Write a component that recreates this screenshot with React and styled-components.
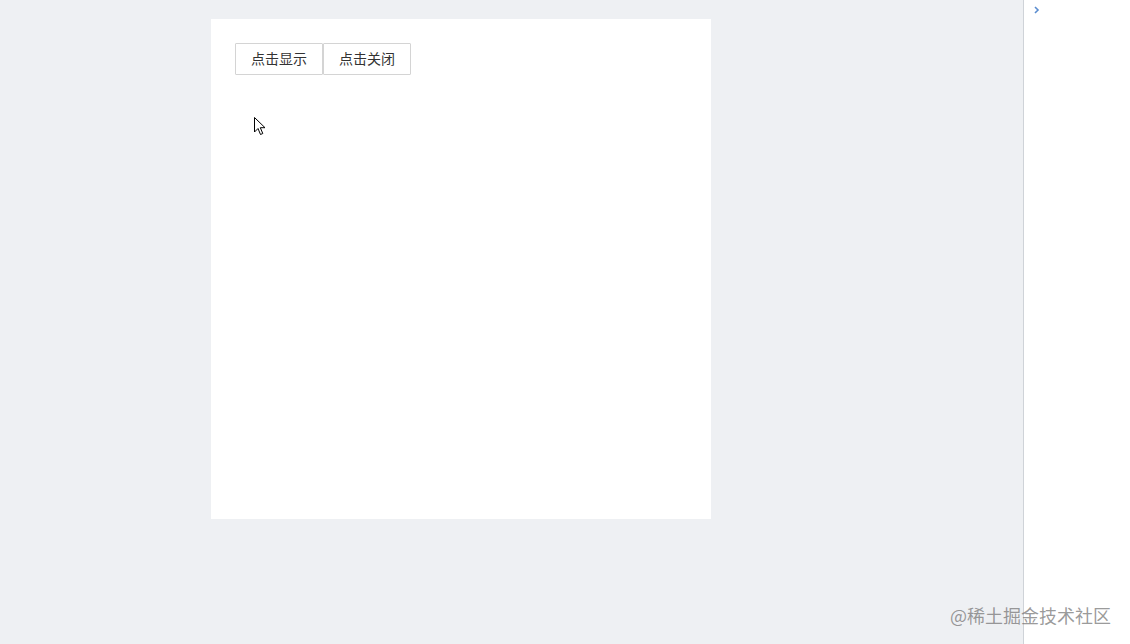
import styled, { createGlobalStyle } from "styled-components";

const GlobalStyle = createGlobalStyle`
	html, body {
		margin: 0;
		padding: 0;
		background-color: #eef0f3;
		font-family: "Noto Sans CJK SC", "Liberation Sans", sans-serif;
	}
`;

const Page = styled.div`
	position: relative;
	display: flex;
	flex-direction: row;
	width: 100%;
	height: 644px;
	overflow: hidden;
`;

const Workspace = styled.div`
	flex: 1;
	padding: 19px 0 0 211px;
`;

const Stage = styled.div`
	position: relative;
	width: 500px;
	height: 500px;
	background-color: #ffffff;
	padding: 24px;
	box-sizing: border-box;
`;

const ButtonRow = styled.div`
	display: flex;
	gap: 0;
`;

const ActionButton = styled.button`
	width: 88px;
	height: 32px;
	padding: 0 0 2px;
	background-color: #ffffff;
	border: 1px solid #d4d4d4;
	border-radius: 1px;
	color: #333333;
	font-family: "Noto Sans CJK SC", sans-serif;
	font-size: 14px;
	line-height: 1;
	cursor: pointer;
`;

const Sidebar = styled.div`
	width: 107px;
	height: 100%;
	background-color: #ffffff;
	border-left: 1px solid #cfd3d8;
	padding: 4px 0 0 8px;
	box-sizing: border-box;
`;

const Toggle = styled.svg`
	display: block;
	color: #5b8dd0;
`;

const Pointer = styled.svg`
	position: absolute;
	left: 43px;
	top: 98px;
`;

const Watermark = styled.div`
	position: absolute;
	right: 19px;
	bottom: 16px;
	font-family: "Noto Sans CJK SC", sans-serif;
	font-size: 18px;
	color: rgba(110, 110, 110, 0.7);
`;

export default function App() {
	return (
		<Page>
			<GlobalStyle />
			<Workspace>
				<Stage>
					<ButtonRow>
						<ActionButton>点击显示</ActionButton>
						<ActionButton>点击关闭</ActionButton>
					</ButtonRow>
					<Pointer width="14" height="20" viewBox="0 0 14 20">
						<path
							d="M0.5 0.5 L0.5 15 L4 11.5 L6.5 17.5 L8.8 16.5 L6.3 10.7 L11 10.7 Z"
							fill="#ffffff"
							stroke="#000000"
							strokeWidth="1"
							strokeLinejoin="miter"
						/>
					</Pointer>
				</Stage>
			</Workspace>
			<Sidebar>
				<Toggle width="10" height="12" viewBox="0 0 10 12">
					<path d="M3 3 L6 6 L3 9" fill="none" stroke="currentColor" strokeWidth="1.6" />
				</Toggle>
			</Sidebar>
			<Watermark>@稀土掘金技术社区</Watermark>
		</Page>
	);
}
